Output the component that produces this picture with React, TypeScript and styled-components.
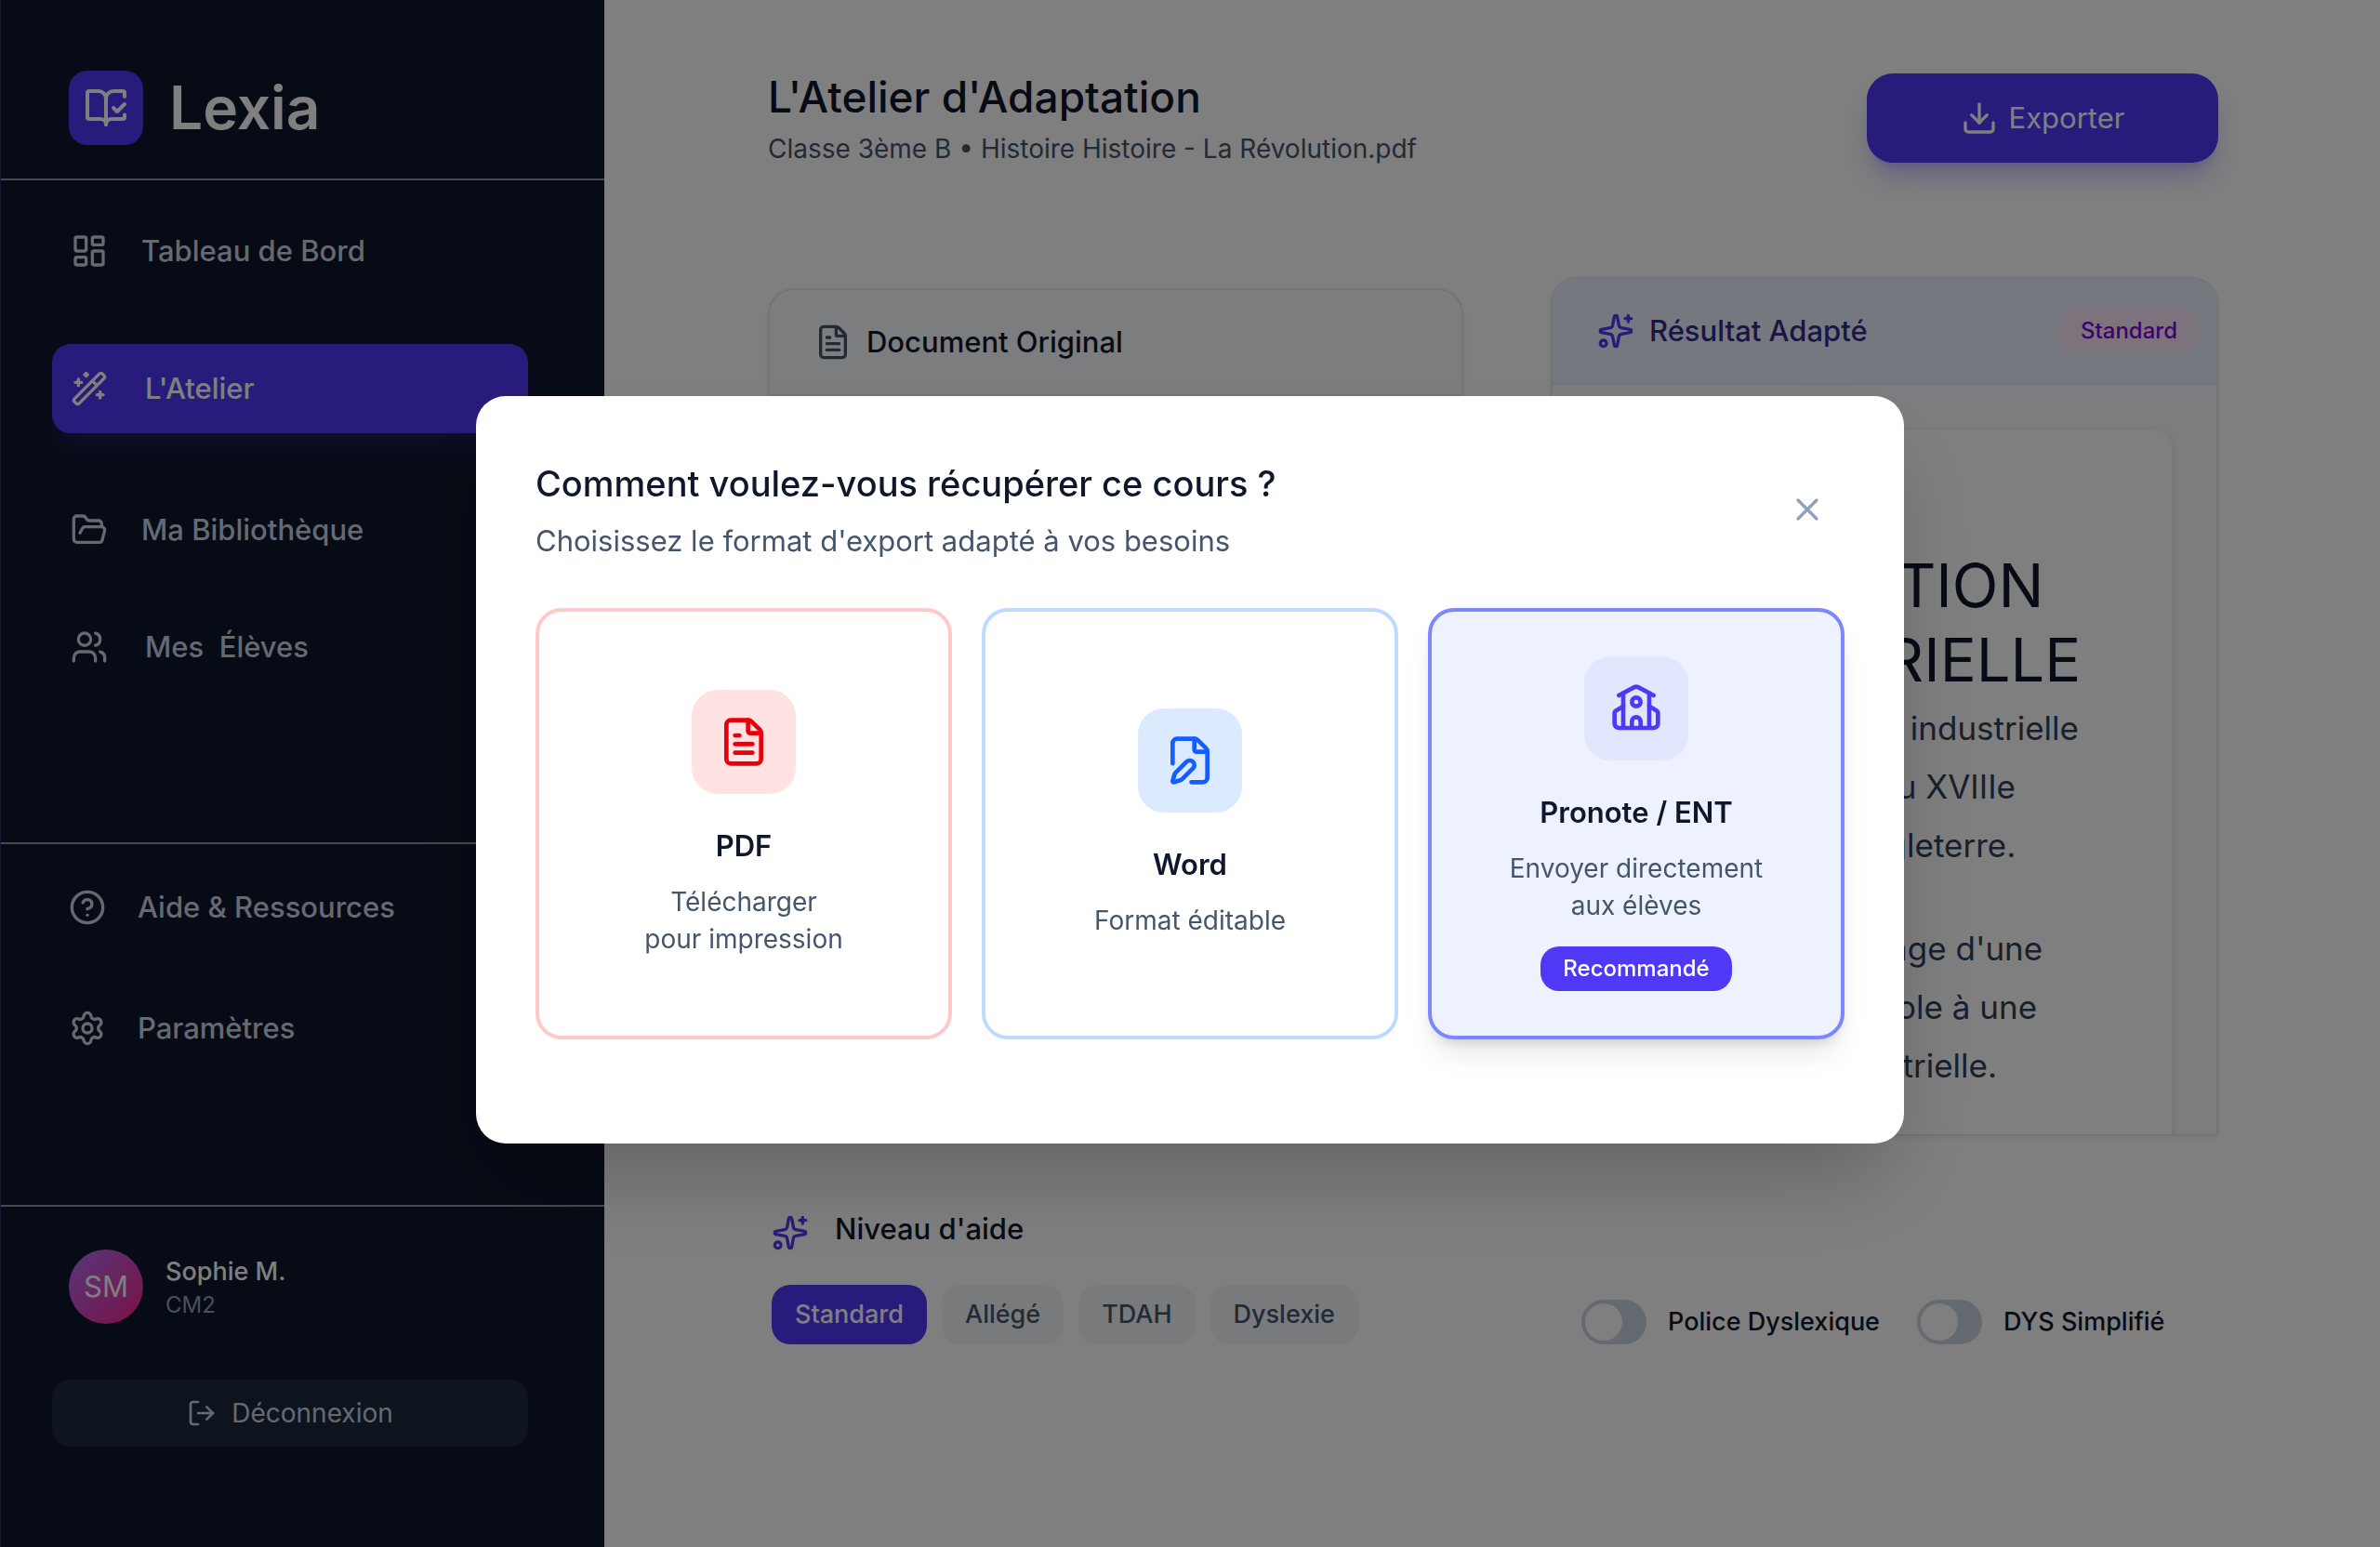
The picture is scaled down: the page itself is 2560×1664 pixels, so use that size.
import React from "react";
import styled, { createGlobalStyle, css } from "styled-components";
import {
  BookOpenCheck,
  CircleQuestionMark,
  Download,
  FilePen,
  FileText,
  FolderOpen,
  LayoutDashboard,
  LogOut,
  School,
  Settings,
  Sparkles,
  Users,
  WandSparkles,
  X,
} from "lucide-react";

const color = {
  indigo: "#4f39f6",
  indigo50: "#eef2ff",
  indigo100: "#e0e7ff",
  ink: "#0f172b",
  slate50: "#f8fafc",
  slate100: "#f1f5f9",
  slate200: "#e2e8f0",
  slate300: "#cad5e2",
  slate400: "#90a1b9",
  slate600: "#45556c",
  slate700: "#314158",
  slate800: "#1d293d",
};

const GlobalStyle = createGlobalStyle`
  *, *::before, *::after { box-sizing: border-box; }
  body {
    margin: 0;
    background: #fff;
    color: ${color.ink};
    font-family: Inter, "Liberation Sans", sans-serif;
    font-size: 28px;
    line-height: 40px;
  }
  h1, h2, h3, p, ul { margin: 0; padding: 0; }
  button { font: inherit; border: 0; cursor: pointer; }
  svg { flex: none; display: block; }
`;

const Page = styled.div`
  display: flex;
  min-height: 100vh;
`;

/* Sidebar */

const Sidebar = styled.aside`
  flex: none;
  width: 650px;
  display: flex;
  flex-direction: column;
  background: ${color.ink};
  border-left: 1px solid #2a2a5c;
  color: ${color.slate300};
`;

const Brand = styled.div`
  display: flex;
  align-items: center;
  gap: 28px;
  padding: 76px 73px 36px;
  border-bottom: 2px solid #94939a;
`;

const BrandMark = styled.span`
  display: grid;
  place-items: center;
  width: 80px;
  height: 80px;
  border-radius: 20px;
  background: ${color.indigo};
  color: #fff;
`;

const BrandName = styled.span`
  font-size: 64px;
  line-height: 80px;
  font-weight: 600;
  color: #fff;
`;

const Nav = styled.nav<{ $secondary?: boolean }>`
  height: ${(p) => (p.$secondary ? 390 : 714)}px;
  padding: ${(p) => (p.$secondary ? "20px 82px 0 53px" : "28px 82px 0 55px")};
  border-bottom: 2px solid #94939a;
`;

const NavList = styled.ul`
  list-style: none;
`;

const NavEntry = styled.li<{ $space?: number }>`
  margin-top: ${(p) => p.$space ?? 0}px;
`;

const NavLink = styled.a<{ $active?: boolean; $gap?: number }>`
  display: flex;
  align-items: center;
  gap: ${(p) => p.$gap ?? 36}px;
  height: 96px;
  padding: 0 20px;
  border-radius: 20px;
  font-size: 31px;
  line-height: 48px;
  font-weight: 500;
  white-space: pre;
  text-decoration: none;
  color: inherit;
  ${(p) =>
    p.$active &&
    css`
      background: ${color.indigo};
      color: #fff;
      box-shadow: 0 20px 30px -6px rgba(79, 57, 246, 0.2),
        0 8px 12px -8px rgba(79, 57, 246, 0.2);
    `}
`;

const Account = styled.div`
  padding: 46px 82px 0 55px;
`;

const Profile = styled.div`
  display: flex;
  align-items: center;
  gap: 24px;
  padding: 0 18px;
`;

const Avatar = styled.span`
  display: grid;
  place-items: center;
  width: 80px;
  height: 80px;
  border-radius: 50%;
  background: linear-gradient(135deg, #ad6cf5, #f6248a);
  color: #fff;
  font-size: 31px;
`;

const ProfileName = styled.p`
  font-size: 27px;
  font-weight: 500;
  color: #fff;
`;

const ProfileClass = styled.p`
  font-size: 24px;
  line-height: 32px;
  color: ${color.slate400};
`;

const LogoutButton = styled.button`
  display: flex;
  align-items: center;
  justify-content: center;
  gap: 16px;
  width: 100%;
  height: 72px;
  margin-top: 60px;
  border-radius: 20px;
  background: ${color.slate800};
  color: ${color.slate300};
`;

/* Workspace */

const Main = styled.main`
  flex: 1;
  min-width: 0;
  padding: 68px 174px 80px 176px;
`;

const Header = styled.header`
  display: flex;
  justify-content: space-between;
  min-height: 118px;
`;

const PageTitle = styled.h1`
  font-size: 46px;
  line-height: 72px;
  font-weight: 500;
`;

const PageSubtitle = styled.p`
  color: ${color.slate600};
`;

const ExportButton = styled.button`
  align-self: center;
  display: flex;
  align-items: center;
  justify-content: center;
  gap: 12px;
  width: 378px;
  height: 96px;
  border-radius: 28px;
  background: ${color.indigo};
  color: #fff;
  font-size: 31px;
  box-shadow: 0 20px 30px -6px rgba(79, 57, 246, 0.3),
    0 8px 12px -8px rgba(79, 57, 246, 0.3);
`;

const columns = css`
  display: grid;
  grid-template-columns: 748fr 718fr;
  column-gap: 94px;
  align-items: end;
`;

const Panels = styled.div`
  ${columns}
  margin-top: 112px;
`;

const Panel = styled.section<{ $tall?: boolean }>`
  height: ${(p) => (p.$tall ? 924 : 912)}px;
  border: 2px solid ${color.slate200};
  border-radius: 28px 28px 0 0;
  background: ${color.slate50};
  overflow: hidden;
  box-shadow: 0 2px 6px rgba(0, 0, 0, 0.06);
`;

const PanelHeader = styled.div<{ $accent?: boolean }>`
  display: flex;
  align-items: center;
  gap: 16px;
  height: 114px;
  padding: 0 18px 0 48px;
  border-bottom: 2px solid ${(p) => (p.$accent ? color.indigo100 : color.slate200)};
  background: ${(p) => (p.$accent ? "#ebf0fe" : color.slate50)};
`;

const PanelTitle = styled.h2<{ $accent?: boolean }>`
  font-size: 31px;
  line-height: 48px;
  font-weight: 500;
  color: ${(p) => (p.$accent ? "#312c85" : color.ink)};
`;

const Tag = styled.span`
  margin-left: auto;
  padding: 0 24px;
  border-radius: 20px;
  background: #f9e6fb;
  color: #8200db;
  font-size: 24px;
  line-height: 48px;
  font-weight: 500;
`;

const Sheet = styled.article`
  min-height: 900px;
  margin: 48px;
  padding: 48px 64px;
  border-radius: 20px;
  background: #fff;
  box-shadow: 0 4px 12px rgba(0, 0, 0, 0.12);
`;

const SheetTitle = styled.h3`
  margin-bottom: 2px;
  font-size: 65px;
  line-height: 80px;
  font-weight: 400;
`;

const SheetText = styled.p`
  margin-bottom: 48px;
  padding-left: 16px;
  font-size: 35px;
  line-height: 63px;
  color: ${color.slate700};
  white-space: nowrap;
`;

const SettingsBar = styled.div`
  ${columns}
  margin-top: 76px;
`;

const LevelTitle = styled.h2`
  display: flex;
  align-items: flex-end;
  gap: 28px;
  padding-left: 4px;
  font-size: 31px;
  line-height: 48px;
  font-weight: 500;
`;

const Levels = styled.div`
  display: flex;
  gap: 16px;
  margin-top: 36px;
  padding-left: 4px;
`;

const LevelButton = styled.button<{ $active?: boolean }>`
  height: 64px;
  padding: 0 25px;
  border-radius: 20px;
  font-size: 27px;
  font-weight: 500;
  background: ${(p) => (p.$active ? color.indigo : color.slate100)};
  color: ${(p) => (p.$active ? "#fff" : color.slate600)};
`;

const Switches = styled.div`
  display: flex;
  gap: 40px;
  padding-left: 33px;
`;

const SwitchLabel = styled.label`
  display: flex;
  align-items: center;
  gap: 23px;
  font-size: 27px;
  line-height: 48px;
  font-weight: 500;
  white-space: nowrap;
`;

const SwitchInput = styled.input`
  appearance: none;
  flex: none;
  width: 70px;
  height: 48px;
  margin: 0;
  padding: 4px;
  border-radius: 24px;
  background: ${color.slate300};
  cursor: pointer;

  &::before {
    content: "";
    display: block;
    width: 40px;
    height: 40px;
    border-radius: 50%;
    background: #fff;
  }

  &:checked {
    background: ${color.indigo};
  }

  &:checked::before {
    margin-left: auto;
  }
`;

/* Export dialog */

const Overlay = styled.div`
  position: fixed;
  inset: 0;
  display: flex;
  align-items: center;
  justify-content: center;
  padding-bottom: 8px;
  background: rgba(0, 0, 0, 0.5);
`;

const Dialog = styled.div`
  width: 60%;
  padding: 64px 64px 112px;
  border-radius: 32px;
  background: #fff;
  box-shadow: 0 50px 100px -24px rgba(0, 0, 0, 0.25);
`;

const DialogHeader = styled.div`
  display: flex;
  justify-content: space-between;
  align-items: center;
`;

const DialogTitle = styled.h2`
  font-size: 38px;
  line-height: 60px;
  font-weight: 500;
`;

const DialogText = styled.p`
  margin-top: 8px;
  font-size: 31px;
  line-height: 48px;
  color: ${color.slate600};
`;

const CloseButton = styled.button`
  display: grid;
  place-items: center;
  width: 80px;
  height: 80px;
  padding: 0;
  border-radius: 20px;
  background: none;
  color: ${color.slate400};
`;

const Formats = styled.div`
  display: grid;
  grid-template-columns: repeat(3, 1fr);
  gap: 32px;
  margin-top: 48px;
`;

const FormatCard = styled.button<{ $border: string; $featured?: boolean }>`
  display: flex;
  flex-direction: column;
  align-items: center;
  justify-content: center;
  padding: 48px;
  border: 4px solid ${(p) => p.$border};
  border-radius: 28px;
  background: ${(p) => (p.$featured ? color.indigo50 : "#fff")};
  color: ${color.ink};
  box-shadow: ${(p) =>
    p.$featured
      ? "0 20px 30px -6px rgba(0, 0, 0, 0.1), 0 8px 12px -6px rgba(0, 0, 0, 0.14)"
      : "none"};
`;

const FormatIcon = styled.span<{ $bg: string; $fg: string }>`
  display: grid;
  place-items: center;
  width: 112px;
  height: 112px;
  border-radius: 28px;
  background: ${(p) => p.$bg};
  color: ${(p) => p.$fg};
`;

const FormatName = styled.span`
  margin-top: 32px;
  font-size: 31px;
  line-height: 48px;
  font-weight: 600;
`;

const FormatText = styled.span`
  margin-top: 16px;
  color: ${color.slate600};
  white-space: pre-line;
`;

const Recommended = styled.span`
  margin-top: 24px;
  padding: 0 24px;
  border-radius: 20px;
  background: ${color.indigo};
  color: #fff;
  font-size: 24px;
  line-height: 48px;
  font-weight: 500;
`;

const mainLinks = [
  { label: "Tableau de Bord", icon: LayoutDashboard },
  { label: "L'Atelier", icon: WandSparkles, active: true, space: 52, gap: 40 },
  { label: "Ma Bibliothèque", icon: FolderOpen, space: 56 },
  { label: "Mes  Élèves", icon: Users, space: 30, gap: 40 },
];

const helpLinks = [
  { label: "Aide & Ressources", icon: CircleQuestionMark, gap: 34 },
  { label: "Paramètres", icon: Settings, space: 34, gap: 34 },
];

const formats = [
  {
    name: "PDF",
    text: "Télécharger\npour impression",
    icon: FileText,
    border: "#ffc9c9",
    bg: "#ffe2e2",
    fg: "#e7000b",
  },
  {
    name: "Word",
    text: "Format éditable",
    icon: FilePen,
    border: "#bedbff",
    bg: "#dbeafe",
    fg: "#155dfc",
  },
  {
    name: "Pronote / ENT",
    text: "Envoyer directement\naux élèves",
    icon: School,
    border: "#7c86ff",
    bg: color.indigo100,
    fg: color.indigo,
    featured: true,
  },
];

const levels = ["Standard", "Allégé", "TDAH", "Dyslexie"];

type LinkItem = {
  label: string;
  icon: React.ComponentType<{ size?: number }>;
  active?: boolean;
  space?: number;
  gap?: number;
};

function Links({ items }: { items: LinkItem[] }) {
  return (
    <NavList>
      {items.map(({ label, icon: Icon, active, space, gap }) => (
        <NavEntry key={label} $space={space}>
          <NavLink href="#" $active={active} $gap={gap} aria-current={active ? "page" : undefined}>
            <Icon size={40} />
            {label}
          </NavLink>
        </NavEntry>
      ))}
    </NavList>
  );
}

export default function App() {
  return (
    <>
      <GlobalStyle />
      <Page>
        <Sidebar>
          <Brand>
            <BrandMark>
              <BookOpenCheck size={48} />
            </BrandMark>
            <BrandName>Lexia</BrandName>
          </Brand>
          <Nav aria-label="Navigation principale">
            <Links items={mainLinks} />
          </Nav>
          <Nav $secondary aria-label="Aide et paramètres">
            <Links items={helpLinks} />
          </Nav>
          <Account>
            <Profile>
              <Avatar>SM</Avatar>
              <div>
                <ProfileName>Sophie M.</ProfileName>
                <ProfileClass>CM2</ProfileClass>
              </div>
            </Profile>
            <LogoutButton type="button">
              <LogOut size={32} />
              Déconnexion
            </LogoutButton>
          </Account>
        </Sidebar>

        <Main>
          <Header>
            <div>
              <PageTitle>L'Atelier d'Adaptation</PageTitle>
              <PageSubtitle>Classe 3ème B • Histoire Histoire - La Révolution.pdf</PageSubtitle>
            </div>
            <ExportButton type="button">
              <Download size={40} />
              Exporter
            </ExportButton>
          </Header>

          <Panels>
            <Panel>
              <PanelHeader>
                <FileText size={40} color={color.slate600} />
                <PanelTitle>Document Original</PanelTitle>
              </PanelHeader>
            </Panel>
            <Panel $tall>
              <PanelHeader $accent>
                <Sparkles size={40} color={color.indigo} />
                <PanelTitle $accent>Résultat Adapté</PanelTitle>
                <Tag>Standard</Tag>
              </PanelHeader>
              <Sheet>
                <SheetTitle>
                  LA
                  <br />
                  RÉVOLUTION
                  <br />
                  INDUSTRIELLE
                </SheetTitle>
                <SheetText>
                  Leur révolution industrielle
                  <br />
                  a commencé au XVIIIe
                  <br />
                  siècle par l'Angleterre.
                </SheetText>
                <SheetText>
                  C'était le passage d'une
                  <br />
                  structure agricole à une
                  <br />
                  structure industrielle.
                </SheetText>
              </Sheet>
            </Panel>
          </Panels>

          <SettingsBar>
            <div>
              <LevelTitle>
                <Sparkles size={40} color={color.indigo} />
                Niveau d'aide
              </LevelTitle>
              <Levels>
                {levels.map((level, i) => (
                  <LevelButton key={level} type="button" $active={i === 0} aria-pressed={i === 0}>
                    {level}
                  </LevelButton>
                ))}
              </Levels>
            </div>
            <Switches>
              <SwitchLabel htmlFor="police">
                <SwitchInput id="police" type="checkbox" />
                Police Dyslexique
              </SwitchLabel>
              <SwitchLabel htmlFor="dys">
                <SwitchInput id="dys" type="checkbox" />
                DYS Simplifié
              </SwitchLabel>
            </Switches>
          </SettingsBar>
        </Main>
      </Page>

      <Overlay>
        <Dialog role="dialog" aria-modal="true" aria-labelledby="export-title">
          <DialogHeader>
            <div>
              <DialogTitle id="export-title">Comment voulez-vous récupérer ce cours ?</DialogTitle>
              <DialogText>Choisissez le format d'export adapté à vos besoins</DialogText>
            </div>
            <CloseButton type="button" aria-label="Fermer">
              <X size={40} />
            </CloseButton>
          </DialogHeader>
          <Formats>
            {formats.map(({ name, text, icon: Icon, border, bg, fg, featured }) => (
              <FormatCard key={name} type="button" $border={border} $featured={featured}>
                <FormatIcon $bg={bg} $fg={fg}>
                  <Icon size={56} />
                </FormatIcon>
                <FormatName>{name}</FormatName>
                <FormatText>{text}</FormatText>
                {featured && <Recommended>Recommandé</Recommended>}
              </FormatCard>
            ))}
          </Formats>
        </Dialog>
      </Overlay>
    </>
  );
}
